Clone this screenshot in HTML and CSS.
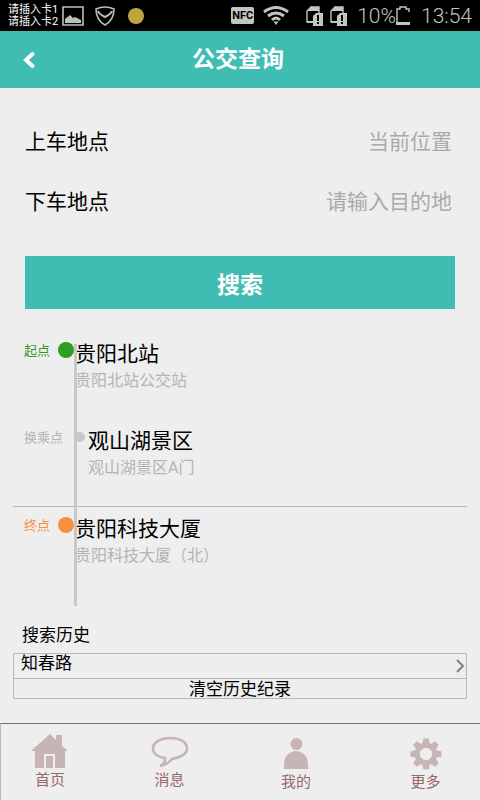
FILE: index.html
```html
<!DOCTYPE html>
<html lang="zh-CN">
<head>
<meta charset="utf-8">
<meta name="viewport" content="width=device-width, initial-scale=1">
<title>公交查询</title>
<link rel="stylesheet" href="styles.css">
</head>
<body>
<div class="app">
  <div class="status">
    <div class="carrier"><span>请插入卡1</span><span>请插入卡2</span></div>
    <svg class="status-picture" width="22" height="20" viewBox="0 0 22 20"><path d="M1 1h20v18H1z" fill="none" stroke="#bebebe" stroke-width="1.6"/><path d="M3 17v-4l5-4 3 3 2-1 6 3v3z" fill="#bebebe"/></svg>
    <svg class="status-shield" width="20" height="20" viewBox="0 0 20 20" fill="none" stroke="#bebebe" stroke-width="1.6"><path d="M1 3Q10-1 19 3Q19 14 10 19Q1 14 1 3z"/><path d="M3 5q1 3 7 6q6-3 7-6" stroke-width="2"/></svg>
    <span class="status-dot"></span>
    <div class="status-right">
      <span class="nfc">NFC</span>
      <svg class="wifi" width="26" height="19" viewBox="0 0 26 19" fill="none" stroke="#c4c4c4" stroke-width="3"><path d="M1 6Q13-3 25 6"/><path d="M5 10Q13 4 21 10"/><path d="M9 14Q13 10 17 14"/><path d="M10.500 15.500h5L13 19z" fill="#c4c4c4" stroke="none"/></svg>
      <svg class="sim" width="18" height="20" viewBox="0 0 18 20"><path d="M1 16V5l4-4h8v6" fill="none" stroke="#c4c4c4" stroke-width="1.400"/><path d="M1 5l4-4h8v4z" fill="#c4c4c4"/><path d="M0 15h8v2H1zM7 10l3-3h7v13H7z" fill="#c4c4c4"/><path d="M11 9h2v6h-2zM11 16h2v2h-2z" fill="#000"/></svg>
      <svg class="sim" width="18" height="20" viewBox="0 0 18 20"><path d="M1 16V5l4-4h8v6" fill="none" stroke="#c4c4c4" stroke-width="1.400"/><path d="M1 5l4-4h8v4z" fill="#c4c4c4"/><path d="M0 15h8v2H1zM7 10l3-3h7v13H7z" fill="#c4c4c4"/><path d="M11 9h2v6h-2zM11 16h2v2h-2z" fill="#000"/></svg>
      <span class="percent">10%</span>
      <svg class="battery" width="14" height="20" viewBox="0 0 14 20"><path d="M1 18V3h3V1h6v2h3v3" fill="none" stroke="#c4c4c4" stroke-width="1.400"/><path d="M0 16h14v3H0z" fill="#c4c4c4"/></svg>
      <span class="clock">13:54</span>
    </div>
  </div>

  <header class="header">
    <button class="back" type="button" aria-label="返回"><svg width="14" height="18" viewBox="0 0 14 18"><path d="M10.500 3L4 9l6.500 6" fill="none" stroke="#fff" stroke-width="4" stroke-linecap="round"/></svg></button>
    <h1 class="title">公交查询</h1>
  </header>

  <main class="main">
    <form class="search">
      <div class="field"><label for="from">上车地点</label><input id="from" type="text" placeholder="当前位置"></div>
      <div class="field"><label for="to">下车地点</label><input id="to" type="text" placeholder="请输入目的地"></div>
      <button class="submit" type="button">搜索</button>
    </form>

    <ol class="route">
      <li class="stop stop-start">
        <span class="tag">起点</span><span class="dot"></span>
        <div class="place"><h2>贵阳北站</h2><p>贵阳北站公交站</p></div>
      </li>
      <li class="stop stop-transfer">
        <span class="tag">换乘点</span><span class="dot"></span>
        <div class="place"><h2>观山湖景区</h2><p>观山湖景区A门</p></div>
      </li>
      <li class="stop stop-end">
        <span class="tag">终点</span><span class="dot"></span>
        <div class="place"><h2>贵阳科技大厦</h2><p>贵阳科技大厦（北）</p></div>
      </li>
    </ol>

    <section class="history">
      <h2>搜索历史</h2>
      <div class="history-box">
        <button class="history-item" type="button">知春路<svg width="10" height="14" viewBox="0 0 10 14"><path d="M2 1l6 6-6 6" fill="none" stroke="#808080" stroke-width="2"/></svg></button>
        <button class="history-clear" type="button">清空历史纪录</button>
      </div>
    </section>
  </main>

  <nav class="tabs">
    <a class="tab tab-home" href="#"><svg width="36" height="34" viewBox="0 0 36 34"><path d="M18 0l6 6V1h6v11l5 4v1h-2v17H23V20H12v14H3V17H0v-1z" fill="#c6b5b4"/><path d="M14 22h7v12h-7z" fill="#c6b5b4"/></svg>首页</a>
    <a class="tab tab-message" href="#"><svg width="38" height="32" viewBox="0 0 38 32"><path d="M14 22C6 21 2 17 2 12.500C2 6 10 2 19.500 2S36 6 36 12.500C36 18 29 22 21 23C18 27 14 29 9 30Q15 27 14 22z" fill="none" stroke="#c6b5b4" stroke-width="2.600"/></svg>消息</a>
    <a class="tab tab-mine" href="#"><svg width="24" height="32" viewBox="0 0 24 32" fill="#c6b5b4"><circle cx="12.500" cy="6" r="6"/><path d="M0 31v-5C0 18 6 13 12 13s12 5 12 13v5z"/></svg>我的</a>
    <a class="tab tab-more" href="#"><svg width="32" height="32" viewBox="-16 -16 32 32"><g fill="#c6b5b4"><path id="tooth" d="M-2.500-15.500h5L4-9h-8z"/><use href="#tooth" transform="rotate(45)"/><use href="#tooth" transform="rotate(90)"/><use href="#tooth" transform="rotate(135)"/><use href="#tooth" transform="rotate(180)"/><use href="#tooth" transform="rotate(225)"/><use href="#tooth" transform="rotate(270)"/><use href="#tooth" transform="rotate(315)"/></g><circle r="8.700" fill="none" stroke="#c6b5b4" stroke-width="5"/></svg>更多</a>
  </nav>
</div>
</body>
</html>
```
FILE: styles.css
```css
* { box-sizing: border-box; margin: 0; padding: 0; }
body { background: #eee; color: #000; font-family: Roboto, "Noto Sans CJK SC", sans-serif; }
button, input { font: inherit; color: inherit; background: none; border: 0; border-radius: 0; }
h1, h2 { font-weight: 400; }
svg { display: block; flex: none; }

.app { min-height: 100vh; display: flex; flex-direction: column; }

.status { height: 31px; padding: 0 8px; display: flex; align-items: center; background: #000; color: #c4c4c4; }
.carrier { display: flex; flex-direction: column; font-size: 11px; line-height: 12px; color: #fff; white-space: nowrap; }
.status-picture { margin-left: 4px; }
.status-shield { margin-left: 11px; }
.status-dot { width: 16px; height: 16px; margin-left: 13px; border-radius: 50%; background: #bea63f; }
.status-right { margin-left: auto; display: flex; align-items: center; }
.nfc { flex: none; width: 23px; border-radius: 2px; background: #c4c4c4; color: #000; font-size: 11px; line-height: 17px; font-weight: 700; text-align: center; }
.wifi { margin-left: 9px; }
.sim { margin-left: 6px; }
.wifi + .sim { margin-left: 17px; }
.percent, .clock { font-size: 21px; line-height: 24px; font-weight: 300; }
.percent { margin-left: 9px; }
.clock { margin-left: 11px; }

.header { height: 57px; display: grid; grid-template-columns: 56px 1fr 60px; align-items: center; background: #3fbdb3; color: #fff; }
.back { height: 56px; padding-left: 22px; cursor: pointer; }
.title { font-size: 23px; line-height: 32px; font-weight: 700; text-align: center; }

.main { flex: 1; }
.search { padding: 24px 25px 0; }
.field { height: 60px; display: flex; align-items: center; font-size: 21px; line-height: 32px; border-bottom: 1px solid #ebebeb; }
.field label { flex: none; }
.field input { flex: 1; min-width: 0; padding-right: 3px; text-align: right; outline: 0; }
.field input::placeholder { color: #aaa; opacity: 1; }
.submit { display: block; width: 100%; height: 53px; margin-top: 24px; background: #3fbdb3; color: #fff; font-size: 23px; font-weight: 700; cursor: pointer; }

.route { position: relative; margin: 23px 13px 0; list-style: none; }
.route::after { content: ""; position: absolute; left: 61px; top: 12px; bottom: -12px; width: 3px; background: #c8c8c8; }
.stop { height: 87px; padding: 6px 0 0 11px; display: flex; align-items: flex-start; border-bottom: 1px solid #ebebeb; }
.stop-transfer { height: 88px; border-bottom-color: #b8b8b8; }
.tag { flex: none; width: 34px; font-size: 13px; line-height: 26px; white-space: nowrap; }
.dot { flex: none; width: 16px; height: 16px; margin-top: 4px; border-radius: 50%; }
.place { padding-left: 1px; }
.place h2 { font-size: 21px; line-height: 32px; }
.place p { font-size: 16px; line-height: 22px; color: #b4b4b4; }
.stop-start .tag { color: #2e9e23; }
.stop-start .dot { background: #2e9e23; }
.stop-transfer .tag { width: 50px; color: #b4b4b4; }
.stop-transfer .dot { width: 11px; height: 10px; margin-top: 7px; background: #c8c8c8; }
.stop-transfer .place { padding-left: 3px; }
.stop-end .tag { color: #f78f3e; }
.stop-end .dot { background: #f78f3e; }

.history { margin: 29px 13px 0; font-size: 17px; line-height: 24px; }
.history h2 { padding-left: 9px; font-size: 17px; line-height: 24px; }
.history-box { margin-top: 6px; border: 1px solid #b8b8b8; }
.history-item { display: flex; justify-content: space-between; width: 100%; height: 25px; padding: 0 1px 0 7px; line-height: 18px; border-bottom: 1px solid #b8b8b8; cursor: pointer; }
.history-item svg { align-self: center; }
.history-clear { display: block; width: 100%; height: 19px; line-height: 18px; text-align: center; cursor: pointer; }

.tabs { height: 77px; display: grid; grid-template-columns: 98px 141px 112px 1fr; border-top: 1px solid #707070; border-left: 1px solid #b8b8b8; }
.tab { display: flex; flex-direction: column; align-items: center; color: #996868; font-size: 15px; line-height: 20px; text-decoration: none; }
.tab svg { margin-bottom: 2px; }
.tab-home { padding-top: 10px; }
.tab-message { padding-top: 12px; }
.tab-mine, .tab-more { padding-top: 14px; }
.tab-more { padding-left: 19px; }
```
